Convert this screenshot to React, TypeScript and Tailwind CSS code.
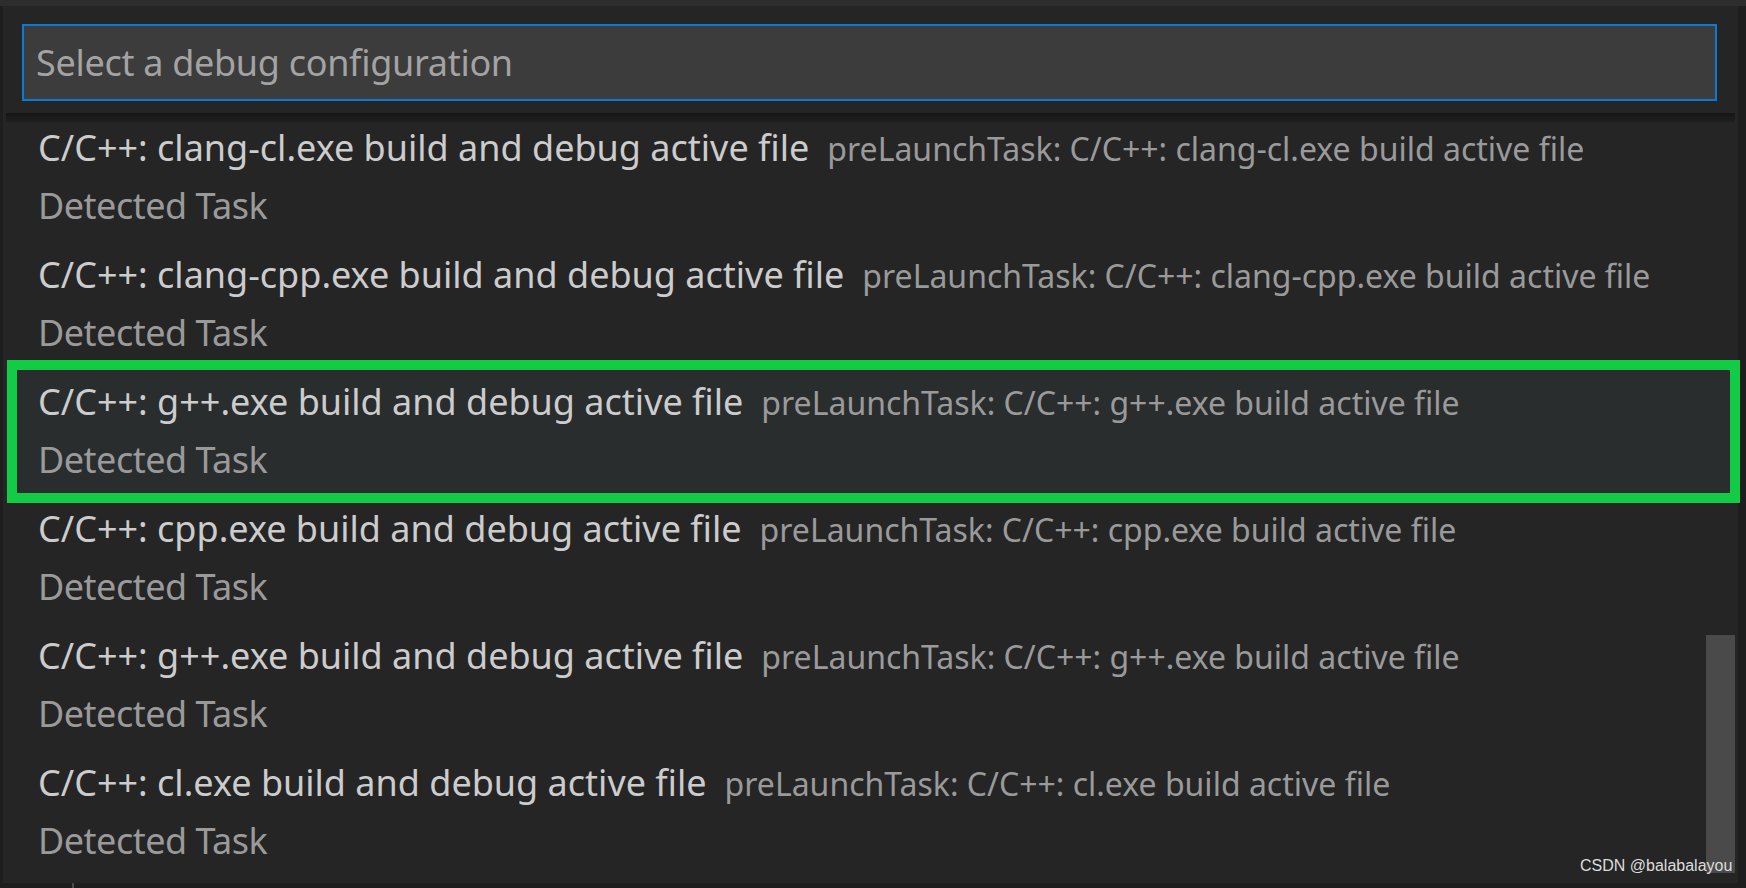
import React from 'react';

const ITEMS = [
  { label: 'C/C++: clang-cl.exe build and debug active file', desc: 'preLaunchTask: C/C++: clang-cl.exe build active file' },
  { label: 'C/C++: clang-cpp.exe build and debug active file', desc: 'preLaunchTask: C/C++: clang-cpp.exe build active file' },
  { label: 'C/C++: g++.exe build and debug active file', desc: 'preLaunchTask: C/C++: g++.exe build active file', active: true },
  { label: 'C/C++: cpp.exe build and debug active file', desc: 'preLaunchTask: C/C++: cpp.exe build active file' },
  { label: 'C/C++: g++.exe build and debug active file', desc: 'preLaunchTask: C/C++: g++.exe build active file' },
  { label: 'C/C++: cl.exe build and debug active file', desc: 'preLaunchTask: C/C++: cl.exe build active file' },
];

const font = { fontFamily: '"Noto Sans", "Open Sans", sans-serif' };

export default function App() {
  return (
    <div className="relative w-[1746px] h-[888px] overflow-hidden bg-[#1e1e1e]" style={font}>
      {/* editor behind, top strip */}
      <div className="h-[6px] bg-[#2d2d2d]" />

      {/* quick pick */}
      <div className="absolute left-[3px] top-[6px] w-[1735px] h-[877px] bg-[#252526]">
        <div className="pt-[18px] pl-[19px]">
          <div className="w-[1695px] h-[77px] border-2 border-[#0a7ad4] bg-[#3c3c3c] flex items-center pl-[12px]">
            <span className="text-[36px] leading-none tracking-[-0.3px] text-[#a3a3a3]">Select a debug configuration</span>
          </div>
        </div>

        <div className="relative mt-[12px] ml-[3px] w-[1729px]">
          {/* scrolled shadow */}
          <div className="absolute inset-x-0 top-0 h-[9px] bg-gradient-to-b from-[#161616] to-[#1f1f1f] z-10" />
          {ITEMS.map((it, i) => (
            <div
              key={i}
              className={`h-[127px] flex flex-col justify-center pl-[32px] ${it.active ? 'bg-[#2a2d2e]' : ''}`}
            >
              <div className="flex items-baseline whitespace-nowrap h-[58px] leading-[58px]">
                <span className="text-[36px] text-[#cccccc]">{it.label}</span>
                <span className="ml-[18px] text-[32px] text-[#9a9a9a]">{it.desc}</span>
              </div>
              <div className="h-[58px] leading-[58px] text-[36px] tracking-[-0.5px] text-[#9a9a9a] whitespace-nowrap">
                Detected Task
              </div>
            </div>
          ))}
          {/* scrollbar slider */}
          <div className="absolute left-[1700px] top-[522px] w-[29px] h-[238px] bg-[#4a4a4a]" />
        </div>
      </div>

      {/* green annotation box */}
      <div className="absolute left-[7px] top-[360px] w-[1733px] h-[143px] border-[10px] border-[#12cc45]" />

      {/* bottom editor strip */}
      <div className="absolute left-[72px] top-[883px] w-[2px] h-[5px] bg-[#4a4a4a]" />

      {/* watermark */}
      <div
        className="absolute left-[1580px] top-[856px] text-[16px] leading-[20px] text-[#dddddd]"
        style={{ fontFamily: '"Liberation Sans", Arial, sans-serif' }}
      >
        CSDN @balabalayou
      </div>
    </div>
  );
}
